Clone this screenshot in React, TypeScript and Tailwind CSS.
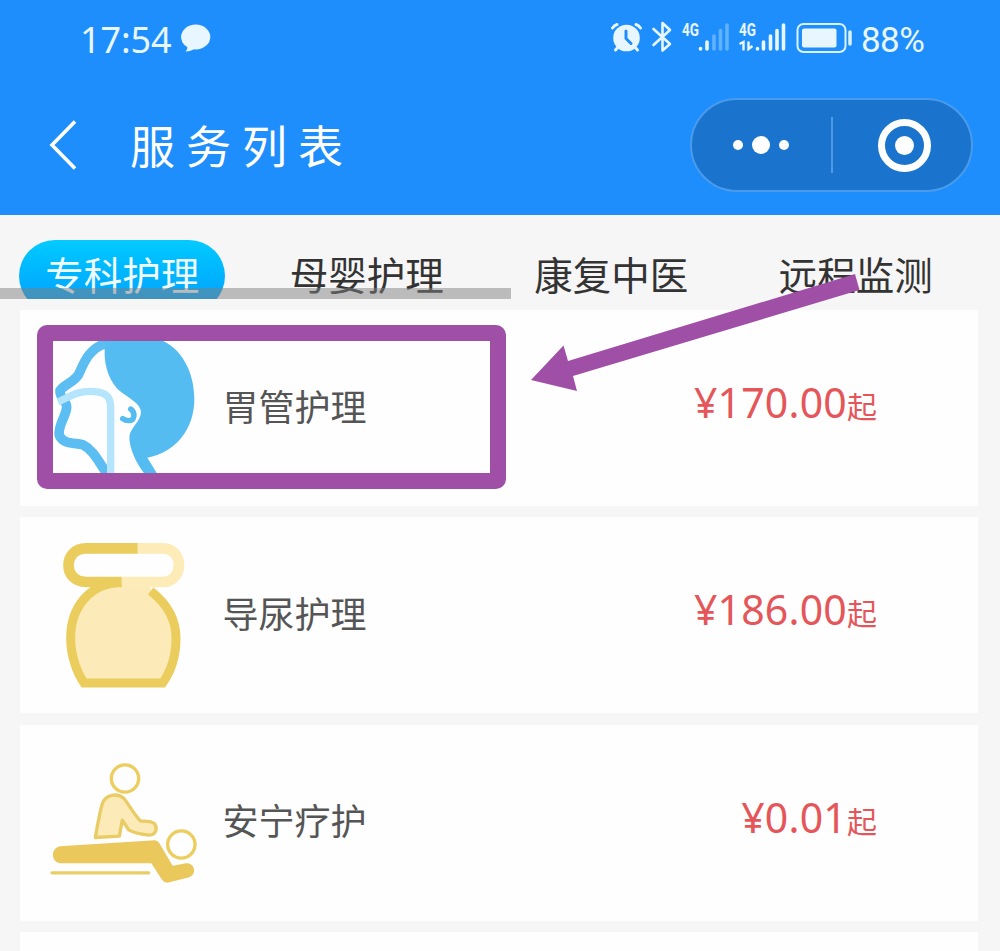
import type { ReactNode } from "react"

type Servico = {
	nome: string
	preco: string
	icone: ReactNode
}

const tabs = ["专科护理", "母婴护理", "康复中医", "远程监测"]

function GastricTubeIcon() {
	return (
		<svg viewBox="30 9 510 510" className="size-[170px]" fill="none">
			<path
				d="M222 60H392C450 82 493 150 493 238C493 330 435 398 352 413L382 462H344C322 432 298 390 298 350C300 325 333 303 333 276C331 252 300 236 274 217C240 190 222 140 224 92Z"
				fill="#55bcf2"
			/>
			<path
				d="M228 70C182 84 166 118 151 152C140 186 104 190 90 212C88 232 112 244 110 262C108 290 82 318 88 346C100 374 134 368 158 374C190 390 204 422 230 460"
				stroke="#5bbdf1"
				strokeWidth="29"
				strokeLinejoin="round"
			/>
			<path
				d="M84 246C116 232 140 214 180 214C222 214 242 226 242 262V462"
				stroke="#b5e5fc"
				strokeWidth="22"
			/>
			<path
				d="M302 267C318 279 314 302 296 302C288 302 284 301 278 296"
				stroke="#55bcf2"
				strokeWidth="16"
				strokeLinecap="round"
			/>
		</svg>
	)
}

function CatheterIcon() {
	return (
		<svg viewBox="0 0 510 510" className="size-[170px]" fill="none">
			<path
				d="M180 168C120 190 92 250 92 325C92 380 112 430 132 459H368C390 428 408 380 408 325C408 265 380 215 338 184L320 160H245Z"
				fill="#fcebb8"
			/>
			<path
				d="M244 157C150 160 92 230 92 325C92 380 112 430 132 459H368C390 428 408 380 408 325C408 265 380 220 332 183"
				stroke="#ebcd5e"
				strokeWidth="27"
			/>
			<path d="M293 55H368C433 55 433 156 368 156H245" stroke="#fdebb8" strokeWidth="32" />
			<path d="M293 55H138C68 55 68 156 138 156H245" stroke="#ebcd5e" strokeWidth="32" />
		</svg>
	)
}

function MassageIcon() {
	return (
		<svg viewBox="0 -37.5 510 510" className="size-[170px]" fill="none">
			<circle cx="255" cy="84" r="41" stroke="#edcd5e" strokeWidth="10" />
			<circle cx="424" cy="282" r="41" stroke="#edcd5e" strokeWidth="10" />
			<path
				d="M166 261C172 228 178 190 187 160C196 132 232 126 252 144C268 164 280 190 302 212C318 212 332 210 344 220C354 238 346 253 328 254C306 252 284 248 266 238L247 209L238 257Z"
				fill="#fcebb8"
				stroke="#e9cc64"
				strokeWidth="10"
				strokeLinejoin="round"
			/>
			<path
				d="M60 287L345 269Q354 270 358 278L398 346L438 338C464 336 472 370 448 380L382 397Q372 397 366 388L334 338H60C32 334 32 292 60 287Z"
				fill="#ebc85c"
			/>
			<path d="M36 367H326" stroke="#ebcd68" strokeWidth="10" strokeLinecap="round" />
		</svg>
	)
}

const servicos: Servico[] = [
	{ nome: "胃管护理", preco: "170.00", icone: <GastricTubeIcon /> },
	{ nome: "导尿护理", preco: "186.00", icone: <CatheterIcon /> },
	{ nome: "安宁疗护", preco: "0.01", icone: <MassageIcon /> },
]

function StatusIcons() {
	return (
		<svg viewBox="0 0 258 60" className="h-[60px] w-[258px]" fill="none">
			{/* alarm */}
			<g stroke="#e8f6ff" strokeWidth="3" strokeLinecap="round">
				<path d="M2.5 8C3.5 6.5 5 5 7 4.5M26 4.5C28 5 29.5 6.5 30.5 8M5.5 30L9 26M27.5 30L24 26" />
			</g>
			<circle cx="16.5" cy="18" r="13.3" fill="#e8f6ff" />
			<path d="M16 11V18.5L21 23.5" stroke="#1e8efc" strokeWidth="3" strokeLinecap="round" />
			{/* bluetooth */}
			<path
				d="M43.5 9L60 24L52.5 30.5V3L60 10L43.5 25"
				stroke="#e8f6ff"
				strokeWidth="2.6"
				strokeLinejoin="round"
				strokeLinecap="round"
			/>
			{/* sim 1 */}
			<text x="72" y="15.5" textLength="17" lengthAdjust="spacingAndGlyphs" className="fill-[#e8f6ff] font-['Roboto'] text-[18px] font-bold">
				4G
			</text>
			<g strokeWidth="3.6" strokeLinecap="round" stroke="#e8f6ff">
				<path d="M90.5 28.5V29M97 22V29" />
				<path d="M104 16V29M110.5 10.5V29M117 5V29" stroke="#61b2fc" />
				<path d="M147.5 28.5V29M153.5 22V29M160.5 16V29M167 10.5V29M173.5 5V29" />
			</g>
			{/* sim 2 */}
			<text x="129" y="15.5" textLength="17" lengthAdjust="spacingAndGlyphs" className="fill-[#e8f6ff] font-['Roboto'] text-[18px] font-bold">
				4G
			</text>
			<path d="M129.5 24L133.5 22V30.5M138.5 21.5V29L142.5 26" stroke="#e8f6ff" strokeWidth="2.4" />
			{/* battery */}
			<rect x="187.5" y="4" width="48" height="28" rx="6" stroke="#d9f2ff" strokeWidth="2" />
			<rect x="192" y="8.5" width="34.5" height="19" rx="2" fill="#e8f6ff" />
			<path d="M240 12V24" stroke="#d9f2ff" strokeWidth="3.5" strokeLinecap="round" />
		</svg>
	)
}

function StatusBar() {
	return (
		<div className="flex h-[78px] items-start pt-[10px] text-[#e8f6ff]">
			<span className="ml-[80px] mt-[4px] w-[101px] font-['Noto_Sans',sans-serif] text-[36px] leading-[52px] tracking-[-0.1px]">
				17:54
			</span>
			<svg viewBox="0 0 30 30" className="mt-[13px] size-[30px]" fill="currentColor">
				<ellipse cx="14.7" cy="14" rx="14.6" ry="12.5" />
				<path d="M6 21C7 25 6 27 4.5 28.5C9 28.5 12 27 14 25Z" />
			</svg>
			<div className="ml-[399px] mt-[10px]">
				<StatusIcons />
			</div>
			<span className="-ml-[7px] mt-[5px] font-['Roboto',sans-serif] text-[35px] leading-[52px] tracking-[-0.6px]">
				88%
			</span>
		</div>
	)
}

function NavBar() {
	return (
		<div className="flex h-[137px] items-start pt-[20px] text-white">
			<svg viewBox="0 0 30 52" className="ml-[49px] mt-[21px] h-[52px] w-[30px]" fill="none">
				<path d="M26 2.5L3 26L26 49.5" stroke="currentColor" strokeWidth="3.6" />
			</svg>
			<h1 className="ml-[51px] mt-[17px] w-[560px] text-[45px] leading-[60px] tracking-[11px]">
				服务列表
			</h1>
			<div className="flex h-[94px] w-[283px] items-center rounded-full border-2 border-[#4a9bec] bg-[#1a73cd]">
				<div className="flex w-[139px] items-center justify-center gap-[9px] pr-[2px]">
					<span className="size-[10px] rounded-full bg-white" />
					<span className="size-[18px] rounded-full bg-white" />
					<span className="size-[10px] rounded-full bg-white" />
				</div>
				<span className="h-[56px] w-[2px] bg-[#4f9ae6]" />
				<div className="ml-[45px] flex size-[53px] items-center justify-center rounded-full border-[7px] border-white">
					<span className="size-[19px] rounded-full bg-white" />
				</div>
			</div>
		</div>
	)
}

function Tabs() {
	return (
		<div className="relative h-[84px] shrink-0 pt-[25px]">
			{/* active pill, cut by the bottom of the scroller */}
			<div className="absolute left-[19px] top-[25px] h-[59px] w-[206px] overflow-hidden">
				<div className="h-[72px] rounded-full bg-linear-to-b from-[#05caff] to-[#049cff]" />
			</div>
			<div className="relative flex">
				{tabs.map((tab, index) => (
					<span
						key={tab}
						className={`w-[244.5px] shrink-0 text-center text-[38.5px] leading-[66px] ${
							index === 0 ? "text-[#f0fbff]" : "text-[#333]"
						}`}
					>
						{tab}
					</span>
				))}
			</div>
			<div className="absolute bottom-0 left-0 h-[11px] w-[511px] bg-[#808080]/50" />
		</div>
	)
}

function ServicoCard({ nome, preco, icone }: Servico) {
	return (
		<div className="flex h-[196px] shrink-0 items-center bg-[#fefefe] pl-[20px] pr-[101px]">
			{icone}
			<span className="ml-[12.5px] pb-[7px] text-[36px] leading-[50px] text-[#555]">{nome}</span>
			<span className="ml-auto flex items-baseline pb-[10px] text-[#e45659]">
				<span className="font-['Noto_Sans',sans-serif] text-[41px] leading-[50px] tracking-[0.2px]">
					¥{preco}
				</span>
				<span className="text-[30px] leading-[48px]">起</span>
			</span>
		</div>
	)
}

function App() {
	return (
		<div className="relative flex h-[951px] w-[1000px] flex-col overflow-hidden bg-[#f6f6f6] font-['Noto_Sans_CJK_SC',sans-serif]">
			<header className="h-[215px] shrink-0 bg-[#1e8efc]">
				<StatusBar />
				<NavBar />
			</header>
			<Tabs />
			<main className="mt-[11px] flex w-[978px] flex-col gap-[11.3px] pl-[20px]">
				{servicos.map((servico) => (
					<ServicoCard key={servico.nome} {...servico} />
				))}
				<div className="h-[196px] shrink-0 bg-[#fefefe]" />
			</main>

			{/* highlight over the first service */}
			<div className="absolute left-[37px] top-[325px] h-[164px] w-[469px] rounded-[10px] border-[16.5px] border-[#a04fa7]" />
			<svg
				viewBox="0 0 340 130"
				className="absolute left-[525px] top-[268px] h-[130px] w-[340px]"
				fill="#a04fa7"
			>
				<path d="M6 112L38.5 77.5L43 93L330 6L334.5 22L48 108L52 123Z" />
			</svg>
		</div>
	)
}

export default App
